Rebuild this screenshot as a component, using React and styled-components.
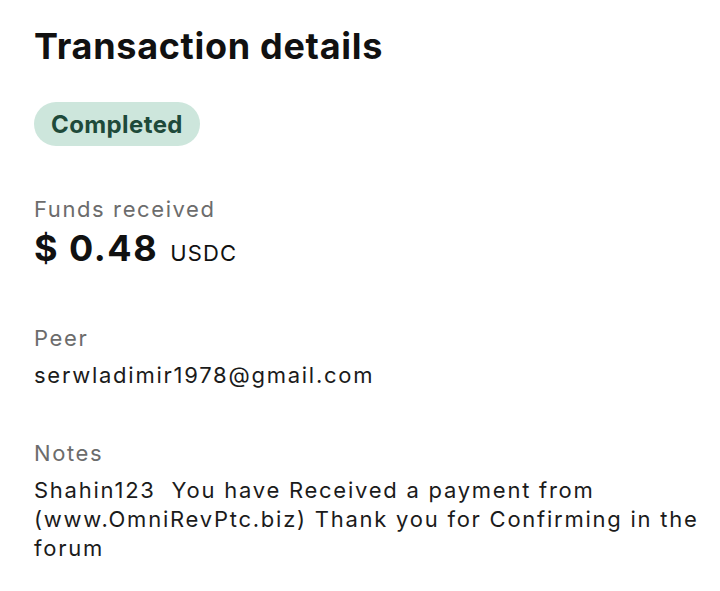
import React from "react";
import styled, { createGlobalStyle } from "styled-components";

const GlobalStyle = createGlobalStyle`
  body {
    margin: 0;
    background: #fff;
    font-family: "Inter", "Liberation Sans", sans-serif;
    color: #1b1b1b;
  }
`;

const Page = styled.div`
  display: flex;
  flex-direction: column;
  padding: 24px 16px 0 34px;
`;

const Title = styled.h1`
  margin: 0;
  font-size: 36px;
  font-weight: 700;
  line-height: 44px;
  letter-spacing: 0.7px;
  color: #111;
`;

const Badge = styled.span`
  align-self: flex-start;
  margin-top: 34px;
  height: 44px;
  padding: 0 17px;
  display: flex;
  align-items: center;
  border-radius: 22px;
  background: #cde6dc;
  color: #1e4a3a;
  font-size: 24px;
  font-weight: 700;
  letter-spacing: 0.4px;
`;

const Section = styled.div`
  display: flex;
  flex-direction: column;
  margin-top: ${(p) => p.$gap}px;
`;

const Label = styled.div`
  font-size: 22px;
  line-height: 30px;
  letter-spacing: 1.6px;
  color: #6c6c6c;
`;

const Amount = styled.div`
  display: flex;
  align-items: baseline;
  gap: 12px;
  margin-top: 4px;
  font-size: 36px;
  font-weight: 700;
  line-height: 40px;
  letter-spacing: 1.5px;
  color: #111;
`;

const Currency = styled.span`
  font-size: 22px;
  font-weight: 400;
  letter-spacing: 1.2px;
`;

const Value = styled.div`
  margin-top: 8px;
  font-size: 22px;
  line-height: 29px;
  letter-spacing: 1.75px;
`;

export default function App() {
  return (
    <>
      <GlobalStyle />
      <Page>
        <Title>Transaction details</Title>
        <Badge>Completed</Badge>
        <Section $gap={48}>
          <Label>Funds received</Label>
          <Amount>
            $ 0.48 <Currency>USDC</Currency>
          </Amount>
        </Section>
        <Section $gap={50}>
          <Label>Peer</Label>
          <Value>serwladimir1978@gmail.com</Value>
        </Section>
        <Section $gap={48}>
          <Label>Notes</Label>
          <Value>
            Shahin123&nbsp; You have Received a payment from
            (www.OmniRevPtc.biz) Thank you for Confirming in the forum
          </Value>
        </Section>
      </Page>
    </>
  );
}
